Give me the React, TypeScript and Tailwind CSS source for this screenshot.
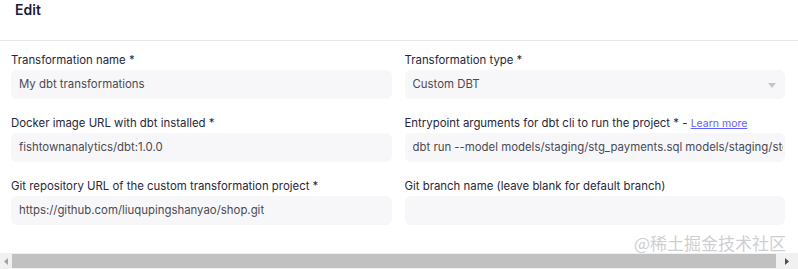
import React from "react";

function Field({ label, value, select }: { label: React.ReactNode; value?: string; select?: boolean }) {
  return (
    <div className="flex flex-col gap-[2px] min-w-0">
      <div className="h-[16px] text-[11.4px] leading-[16px] text-[#27273a] whitespace-nowrap">{label}</div>
      <div className="relative h-[29px] rounded-[6px] bg-[#f7f7f9] pl-[8px] pr-[2px] flex items-center overflow-hidden">
        <span className="text-[11.4px] text-[#4a4a56] whitespace-nowrap overflow-hidden">{value}</span>
        {select && (
          <svg className="absolute right-[9px] top-[13px]" width="8" height="5" viewBox="0 0 8 5">
            <path d="M0 0 L8 0 L4 5 Z" fill="#c4c4cc" />
          </svg>
        )}
      </div>
    </div>
  );
}

export default function App() {
  return (
    <div className="relative w-[798px] h-[269px] bg-white overflow-hidden" style={{ fontFamily: "Inter, 'Noto Sans', sans-serif" }}>
      <div className="h-[41px] border-b border-[#e8e8ec] pl-[15px] pt-[1px]">
        <div className="text-[14px] leading-[18px] font-semibold text-[#1c1b3a]">Edit</div>
      </div>
      <div className="grid grid-cols-2 gap-x-[13px] gap-y-[16px] pl-[11px] pr-[13px] pt-[11px]">
        <Field label="Transformation name *" value="My dbt transformations" />
        <Field label="Transformation type *" value="Custom DBT" select />
        <Field label="Docker image URL with dbt installed *" value="fishtownanalytics/dbt:1.0.0" />
        <Field
          label={
            <>
              Entrypoint arguments for dbt cli to run the project * -{" "}
              <span className="text-[10.5px] text-[#615eff] underline">Learn more</span>
            </>
          }
          value="dbt run --model models/staging/stg_payments.sql models/staging/stg_orders.sql"
        />
        <Field label="Git repository URL of the custom transformation project *" value="https://github.com/liuqupingshanyao/shop.git" />
        <Field label="Git branch name (leave blank for default branch)" value="" />
      </div>
      <div className="absolute left-0 right-0 bottom-0 h-[16px] bg-[#f1f1f1] flex items-center">
        <div className="w-[12px] h-full flex items-center justify-center">
          <svg width="4" height="7" viewBox="0 0 4 7"><path d="M4 0 L0 3.5 L4 7 Z" fill="#a3a3a3" /></svg>
        </div>
        <div className="h-[14px] w-[764px] bg-[#c1c1c1]" />
        <div className="flex-1 h-full flex items-center justify-center">
          <svg width="4" height="7" viewBox="0 0 4 7"><path d="M0 0 L4 3.5 L0 7 Z" fill="#505050" /></svg>
        </div>
      </div>
      <div
        className="absolute right-[12px] bottom-[16px] text-[17px] leading-[20px] text-[#cfcfd3] whitespace-nowrap"
        style={{ fontFamily: "'Noto Sans CJK SC', sans-serif" }}
      >
        @稀土掘金技术社区
      </div>
    </div>
  );
}
